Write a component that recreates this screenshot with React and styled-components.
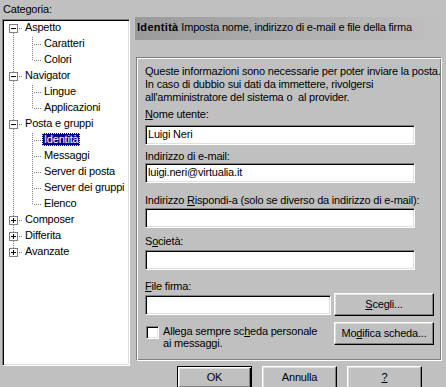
import React from 'react';
import styled, { createGlobalStyle, css } from 'styled-components';

const Global = createGlobalStyle`
  html, body { margin: 0; padding: 0; background: #c0c0c0; }
  body {
    font-family: "Liberation Sans", Arial, sans-serif;
    font-size: 11px;
    letter-spacing: -0.2px;
    color: #000;
  }
  * { box-sizing: border-box; }
`;

const Window = styled.div`
  width: 446px;
  height: 387px;
  overflow: hidden;
  background: #c0c0c0;
  display: grid;
  grid-template-columns: 128px minmax(0, 1fr);
  column-gap: 5px;
  padding: 3px 0 0 2px;
  align-items: start;
`;

const LeftCol = styled.div`
  display: flex;
  flex-direction: column;
`;

const Caption = styled.div`
  line-height: 13px;
  padding-left: 1px;
`;

const TreePanel = styled.div`
  margin-top: 3px;
  height: 347px;
  background: #fff;
  border: 1px solid;
  border-color: #808080 #fff #fff #808080;
  box-shadow: inset 1px 1px #000, inset -1px -1px #dfdfdf;
  padding: 1px 1px;
  display: flex;
  flex-direction: column;
`;

const Row = styled.div`
  display: flex;
  align-items: flex-start;
  height: 16px;
`;

const Label = styled.span`
  display: inline-block;
  line-height: 13px;
  height: 13px;
  padding: 0 2px;
  white-space: nowrap;
  ${(p) =>
    p.$selected &&
    css`
      background: #000080;
      color: #fff;
      outline: 1px dotted #ffff80;
      outline-offset: -1px;
    `}
`;

const Guide = styled.svg`
  flex: none;
  display: block;
  shape-rendering: crispEdges;
`;

const DOT = '#808080';

function VLine({ x, y1, y2 }) {
  return <line x1={x + 0.5} x2={x + 0.5} y1={y1} y2={y2} stroke={DOT} strokeDasharray="1 1" />;
}
function HLine({ x1, x2, y }) {
  return <line x1={x1} x2={x2} y1={y + 0.5} y2={y + 0.5} stroke={DOT} strokeDasharray="1 1" />;
}

function RootGuide({ first, last, expanded }) {
  return (
    <Guide width="19" height="16">
      {!first && <VLine x={9} y1={0} y2={3} />}
      {!last && <VLine x={9} y1={12} y2={16} />}
      <HLine x1={15} x2={19} y={7} />
      <rect x="5.5" y="3.5" width="8" height="8" fill="#fff" stroke="#808080" />
      <line x1="7" x2="12" y1="7.5" y2="7.5" stroke="#000" />
      {!expanded && <line x1="9.5" x2="9.5" y1="5" y2="10" stroke="#000" />}
    </Guide>
  );
}

function ChildGuide({ last }) {
  return (
    <Guide width="38" height="16">
      <VLine x={9} y1={0} y2={16} />
      <VLine x={28} y1={0} y2={last ? 8 : 16} />
      <HLine x1={30} x2={38} y={7} />
    </Guide>
  );
}

const tree = [
  { label: 'Aspetto', children: ['Caratteri', 'Colori'] },
  { label: 'Navigator', children: ['Lingue', 'Applicazioni'] },
  {
    label: 'Posta e gruppi',
    children: ['Identità', 'Messaggi', 'Server di posta', 'Server dei gruppi', 'Elenco'],
  },
  { label: 'Composer' },
  { label: 'Differita' },
  { label: 'Avanzate' },
];

function Tree() {
  return (
    <TreePanel>
      {tree.map((node, i) => (
        <React.Fragment key={node.label}>
          <Row>
            <RootGuide first={i === 0} last={i === tree.length - 1} expanded={!!node.children} />
            <Label>{node.label}</Label>
          </Row>
          {node.children &&
            node.children.map((c, j) => (
              <Row key={c}>
                <ChildGuide last={j === node.children.length - 1} />
                <Label $selected={c === 'Identità'}>{c}</Label>
              </Row>
            ))}
        </React.Fragment>
      ))}
    </TreePanel>
  );
}

const RightCol = styled.div`
  display: flex;
  flex-direction: column;
  min-width: 0;
`;

const Header = styled.div`
  margin-top: 14px;
  height: 23px;
  padding: 4px 0 0 2px;
  line-height: 13px;
  white-space: nowrap;
  background: linear-gradient(90deg, #9a9a9a 0%, #adadad 45%, #c0c0c0 100%);
  b {
    font-weight: bold;
    letter-spacing: 0.3px;
  }
`;

const GroupBox = styled.div`
  width: 306px;
  margin: 17px 0 0 1px;
  border: 1px solid;
  border-color: #808080 #fff #fff #808080;
  box-shadow: inset 1px 1px #fff, inset -1px -1px #808080;
  padding: 7px 0 11px 8px;
  display: flex;
  flex-direction: column;
`;

const Desc = styled.div`
  line-height: 13px;
  white-space: nowrap;
`;

const FieldLabel = styled.div`
  line-height: 13px;
  height: 13px;
  margin-top: ${(p) => p.$mt}px;
  white-space: nowrap;
`;

const U = styled.span`
  text-decoration: underline;
`;

const Input = styled.input`
  display: block;
  width: ${(p) => p.$w || 270}px;
  height: 20px;
  margin: ${(p) => p.$mt || 0}px 0 0 0;
  padding: 0 2px 3px 2px;
  font-family: "Liberation Sans", Arial, sans-serif;
  font-size: 11px;
  letter-spacing: -0.2px;
  color: #000;
  background: #fff;
  border: 1px solid;
  border-color: #808080 #fff #fff #808080;
  box-shadow: inset 1px 1px #000, inset -1px -1px #dfdfdf;
  outline: none;
`;

const FileRow = styled.div`
  display: flex;
  align-items: flex-start;
  gap: 3px;
`;

const Button = styled.button`
  width: ${(p) => p.$w}px;
  height: 23px;
  padding: 0 0 1px;
  font-family: "Liberation Sans", Arial, sans-serif;
  font-size: 11px;
  letter-spacing: -0.2px;
  color: #000;
  background: #c0c0c0;
  border: 1px solid;
  border-color: #fff #000 #000 #fff;
  box-shadow: inset -1px -1px #808080, inset 1px 1px #dfdfdf;
  line-height: 13px;
  ${(p) =>
    p.$default &&
    css`
      border-color: #000;
      box-shadow: inset 1px 1px #fff, inset -1px -1px #000, inset -2px -2px #808080,
        inset 2px 2px #dfdfdf;
    `}
`;

const CheckRow = styled.div`
  margin-top: 6px;
  display: flex;
  align-items: flex-start;
`;

const CheckArea = styled.div`
  width: 189px;
  display: flex;
  align-items: flex-start;
  gap: 4px;
  padding: 4px 0 0 1px;
`;

const Box = styled.span`
  flex: none;
  width: 13px;
  height: 13px;
  background: #fff;
  border: 1px solid;
  border-color: #808080 #fff #fff #808080;
  box-shadow: inset 1px 1px #000, inset -1px -1px #dfdfdf;
`;

const CheckText = styled.span`
  line-height: 12px;
  margin-top: -1px;
`;

const ButtonBar = styled.div`
  display: flex;
  gap: 10px;
  margin-top: 5px;
  padding-left: 42px;
`;

export default function App() {
  return (
    <>
      <Global />
      <Window>
        <LeftCol>
          <Caption>Categoria:</Caption>
          <Tree />
        </LeftCol>
        <RightCol>
          <Header>
            <b>Identità</b> Imposta nome, indirizzo di e-mail e file della firma
          </Header>
          <GroupBox>
            <Desc>
              Queste informazioni sono necessarie per poter inviare la posta.
              <br />
              In caso di dubbio sui dati da immettere, rivolgersi
              <br />
              all'amministratore del sistema o{'\u00a0'} al provider.
            </Desc>
            <FieldLabel $mt={4}>
              <U>N</U>ome utente:
            </FieldLabel>
            <Input $mt={4} defaultValue="Luigi Neri" />
            <FieldLabel $mt={5}>Indirizzo di e-mail:</FieldLabel>
            <Input $mt={0} defaultValue="luigi.neri@virtualia.it" />
            <FieldLabel $mt={11}>
              Indirizzo <U>R</U>ispondi-a (solo se diverso da indirizzo di e-mail):
            </FieldLabel>
            <Input $mt={1} defaultValue="" />
            <FieldLabel $mt={7}>
              S<U>o</U>cietà:
            </FieldLabel>
            <Input $mt={2} defaultValue="" />
            <FieldLabel $mt={10}>
              <U>F</U>ile firma:
            </FieldLabel>
            <FileRow>
              <Input $mt={2} $w={186} defaultValue="" />
              <Button $w={100}>
                <U>S</U>cegli...
              </Button>
            </FileRow>
            <CheckRow>
              <CheckArea>
                <Box />
                <CheckText>
                  Allega sempre sc<U>h</U>eda personale
                  <br />
                  ai messaggi.
                </CheckText>
              </CheckArea>
              <Button $w={100}>
                Mo<U>d</U>ifica scheda...
              </Button>
            </CheckRow>
          </GroupBox>
          <ButtonBar>
            <Button $w={75} $default>
              OK
            </Button>
            <Button $w={75}>Annulla</Button>
            <Button $w={75}>
              <U>?</U>
            </Button>
          </ButtonBar>
        </RightCol>
      </Window>
    </>
  );
}
